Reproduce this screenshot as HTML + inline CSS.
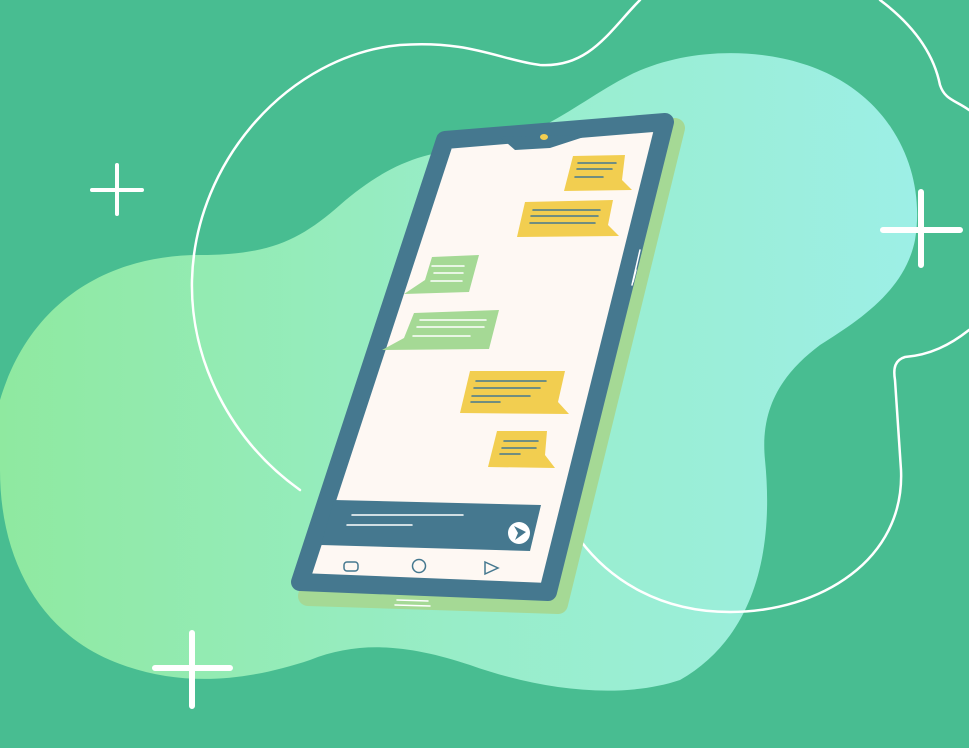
<!DOCTYPE html>
<html><head><meta charset="utf-8"><style>html,body{margin:0;padding:0;background:#48BD91;overflow:hidden}svg{display:block}</style></head><body>
<svg width="969" height="748" viewBox="0 0 969 748" xmlns="http://www.w3.org/2000/svg">
<defs><linearGradient id="g" x1="0" y1="0" x2="1" y2="0"><stop offset="0" stop-color="#8FE9A0"/><stop offset="0.5" stop-color="#98EDC8"/><stop offset="1" stop-color="#9DEFE6"/></linearGradient></defs>
<rect width="969" height="748" fill="#48BD91"/>
<path d="M0,400 C30,300 110,255 200,255 C270,255 300,240 340,205 C380,170 420,150 470,150 C540,140 580,100 630,75 C690,45 780,45 840,80 C900,115 925,180 915,240 C905,290 860,320 820,345 C780,375 760,410 765,460 C775,560 750,640 680,680 C620,700 540,690 470,665 C410,645 360,640 310,660 C250,680 180,690 110,660 C40,630 0,560 0,470 Z" fill="url(#g)"/>
<g fill="none" stroke="#fff" stroke-width="2.5" stroke-linecap="round">
<path d="M300,490 C230,440 190,360 192,280 C195,160 290,55 400,45 C470,40 500,60 540,65 C590,68 610,30 640,0"/>
<path d="M880,0 C920,30 935,60 940,85 C945,100 955,100 969,110"/>
<path d="M969,330 C950,345 930,355 905,357 C895,360 893,368 895,380 L901,470 C905,560 820,612 730,612 C660,612 610,580 580,540"/>
</g>
<g stroke="#fff" stroke-linecap="round" fill="none">
<path d="M92,190 H142 M117,165 V214" stroke-width="4"/>
<path d="M883,230 H960 M921,192 V265" stroke-width="6"/>
<path d="M155,668 H230 M192,633 V706" stroke-width="6"/>
</g>
<!-- phone side shade -->
<polygon points="452,148 675,128 558,604 308,596" fill="#A5D995" stroke="#A5D995" stroke-width="20" stroke-linejoin="round"/>
<polygon points="445,140 665,122 548,592 300,582" fill="#FEF8F3" stroke="#45788F" stroke-width="18" stroke-linejoin="round"/>
<path d="M500,137 L515,150 L550,148 L590,135 Z" fill="#45788F"/>
<ellipse cx="544" cy="137" rx="4" ry="3" fill="#F2CE50"/>
<g stroke="#fff" stroke-width="1.5" stroke-linecap="round"><path d="M640,250 L632,285 M636,270 L633,282 M395,605 L430,606 M397,600 L428,601"/></g>
<!-- bubbles -->
<g fill="#F2CE50">
<path d="M573,156 L625,155 L622,180 L632,190 L564,191 Z"/>
<path d="M525,202 L613,200 L608,225 L619,236 L517,237 Z"/>
<path d="M470,371 L565,371 L558,402 L569,414 L460,413 Z"/>
<path d="M497,431 L547,431 L545,455 L555,468 L488,467 Z"/>
</g>
<g fill="#A5D995">
<path d="M432,257 L479,255 L469,292 L404,294 L425,280 Z"/>
<path d="M414,313 L499,310 L489,349 L382,350 L404,338 Z"/>
</g>
<g stroke="#45788F" stroke-width="1.5" stroke-linecap="round">
<path d="M578,163 H616 M577,169 H612 M575,177 H603"/>
<path d="M533,210 H600 M531,216 H598 M530,223 H595"/>
<path d="M476,381 H546 M474,388 H540 M472,396 H530 M471,402 H500"/>
<path d="M504,441 H538 M502,448 H536 M500,454 H520"/>
</g>
<g stroke="#fff" stroke-width="1.5" stroke-linecap="round">
<path d="M432,266 H464 M434,273 H463 M431,281 H462"/>
<path d="M420,320 H486 M417,327 H484 M413,336 H470"/>
</g>
<!-- input bar -->
<path d="M334,500 L541,505 L530,551 L321,545 Z" fill="#45788F"/>
<g stroke="#fff" stroke-width="1.5" stroke-linecap="round"><path d="M352,515 H463 M347,525 H412"/></g>
<circle cx="519" cy="533" r="11" fill="#fff"/>
<path d="M514,526 L526,532 L515,540 L518,533 Z" fill="#45788F"/>
<g fill="none" stroke="#45788F" stroke-width="1.5"><rect x="344" y="562" width="14" height="9" rx="3"/><circle cx="419" cy="566" r="6.5"/><path d="M485,562 L498,568 L485,574 Z"/></g>
</svg>
</body></html>
